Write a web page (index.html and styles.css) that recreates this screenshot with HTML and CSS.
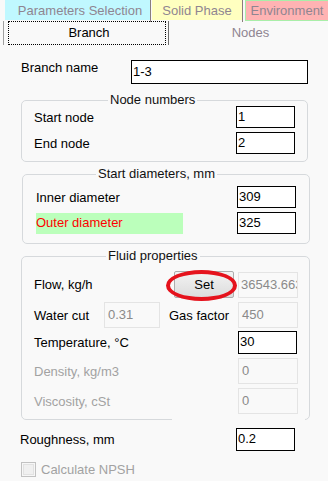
FILE: index.html
```html
<!DOCTYPE html>
<html>
<head>
<meta charset="utf-8">
<link rel="stylesheet" href="styles.css">
</head>
<body>
<div class="tabbar">
  <div class="tab tab-params">Parameters Selection</div>
  <div class="tab-sep"></div>
  <div class="tab tab-solid">Solid Phase</div>
  <div class="tab-sep tab-sep2"></div>
  <div class="tab tab-env">Environment</div>
</div>
<div class="subtabs">
  <div class="subtab-active"><div class="focus">Branch</div></div>
  <div class="subtab-nodes">Nodes</div>
</div>

<div class="branch-row">
  <div class="branch-label">Branch name</div>
  <div class="inp inp-branch">1-3</div>
</div>

<fieldset class="group group-nodes">
  <legend class="legend-nodes">Node numbers</legend>
  <div class="grow nodes-row first">
    <span>Start node</span>
    <div class="inp inp-num">1</div>
  </div>
  <div class="grow nodes-row second">
    <span>End node</span>
    <div class="inp inp-num">2</div>
  </div>
</fieldset>

<fieldset class="group group-diam">
  <legend class="legend-diam">Start diameters, mm</legend>
  <div class="grow diam-row first">
    <span>Inner diameter</span>
    <div class="inp inp-num">309</div>
  </div>
  <div class="grow diam-row second">
    <span class="outer-label">Outer diameter</span>
    <div class="inp inp-num">325</div>
  </div>
</fieldset>

<fieldset class="group group-fluid">
  <legend class="legend-fluid">Fluid properties</legend>
  <div class="grow fluid-row row-flow">
    <span class="fill">Flow, kg/h</span>
    <div class="set-wrap">
      <div class="set-btn">Set</div>
      <div class="set-ring"></div>
    </div>
    <div class="inp-dis inp-dis-num inp-flow">36543.663</div>
  </div>
  <div class="grow fluid-row row-water">
    <span class="water-label">Water cut</span>
    <div class="inp-dis inp-dis-cut">0.31</div>
    <span class="fill gas-label">Gas factor</span>
    <div class="inp-dis inp-dis-num">450</div>
  </div>
  <div class="grow fluid-row row-temp">
    <span>Temperature, °C</span>
    <div class="inp inp-num">30</div>
  </div>
  <div class="grow fluid-row row-dis">
    <span class="dis-label">Density, kg/m3</span>
    <div class="inp-dis inp-dis-num">0</div>
  </div>
  <div class="grow fluid-row row-dis">
    <span class="dis-label">Viscosity, cSt</span>
    <div class="inp-dis inp-dis-num">0</div>
  </div>
</fieldset>

<div class="rough-row">
  <span>Roughness, mm</span>
  <div class="inp inp-num">0.2</div>
</div>

<div class="check-row">
  <span class="checkbox"></span>
  <span class="check-label">Calculate NPSH</span>
</div>
</body>
</html>
```

FILE: styles.css
```css
* { box-sizing: border-box; }
html, body { margin: 0; padding: 0; }
body {
  width: 328px;
  height: 481px;
  overflow: hidden;
  background: #f9f9f9;
  font: 13px/15px "Liberation Sans", Arial, sans-serif;
  color: #000;
}

/* top tab strip */
.tabbar {
  display: flex;
  height: 21px;
  padding-left: 5px;
}
.tab {
  height: 20px;
  line-height: 21px;
  text-align: center;
  color: #8f8591;
  white-space: nowrap;
}
.tab-params { width: 145px; background: #c0f8ff; padding-left: 5px; }
.tab-sep { width: 1px; height: 22px; background: #8a7d7d; margin-right: 1px; }
.tab-sep2 { margin-right: 2px; }
.tab-solid { width: 90px; background: #ffffc0; }
.tab-env {
  flex: 1;
  height: 21px;
  line-height: 19px;
  background: #ffb3b3;
  border: 1px solid #a9eea9;
  border-right: none;
}

/* sub tabs */
.subtabs {
  display: flex;
  height: 24px;
}
.subtab-active {
  margin-left: 3px;
  width: 166px;
  height: 24px;
  border-left: 1px solid #a0a0a0;
  border-right: 1px solid #6d6d6d;
  padding: 0 2px 0 4px;
}
.focus {
  height: 24px;
  border: 1px dotted #000;
  text-align: center;
  line-height: 22px;
  padding-left: 4px;
}
.subtab-nodes {
  flex: 1;
  text-align: center;
  line-height: 24px;
  color: #8f8591;
  padding-left: 4px;
}

/* inputs */
.inp {
  background: #fff;
  border: 1px solid #000;
  padding-left: 1px;
  line-height: 20px;
  white-space: nowrap;
  overflow: hidden;
}
.inp-branch { width: 177px; height: 24px; line-height: 22px; }
.inp-num { width: 59px; height: 22px; margin-right: 1px; }
.inp-dis {
  border: 1px solid #e4e4e4;
  color: #8a8a8a;
  padding-left: 3px;
  height: 26px;
  line-height: 23px;
  white-space: nowrap;
  overflow: hidden;
}
.inp-flow { padding-left: 2px; }
.inp-dis-num { width: 60px; }
.inp-dis-cut { width: 56px; }

/* branch */
.branch-row {
  display: flex;
  margin-top: 15px;
  padding-left: 21px;
  height: 24px;
}
.branch-label { width: 110px; align-self: flex-start; }

/* groups */
.group {
  margin: 0;
  padding: 0;
  border: 1px solid #d6d9dc;
  border-radius: 5px;
  min-inline-size: 0;
}
.group legend {
  padding: 0 2px;
  line-height: 12px;
  height: 12px;
  color: #111;
}
.grow {
  display: flex;
  align-items: center;
  justify-content: space-between;
}

.group-nodes { margin: 10px 0 0 21px; width: 287px; padding-bottom: 7px; }
.legend-nodes { margin-left: 86px; }
.nodes-row { padding: 0 11px 0 12px; height: 22px; }
.nodes-row.second { margin-top: 4px; }

.group-diam { margin: 6px 0 0 22px; width: 288px; padding-bottom: 9px; }
.legend-diam { margin-left: 73px; }
.diam-row { padding: 0 12px 0 13px; height: 22px; }
.diam-row.first { margin-top: 6px; }
.diam-row.second { margin-top: 4px; }
.outer-label {
  width: 147px;
  height: 21px;
  line-height: 20px;
  background: #bbffbb;
  color: #ff0000;
}

.group-fluid {
  position: relative;
  margin: 6px 0 0 21px;
  width: 289px;
  padding-bottom: 5px;
}
/* the bottom edge of this group is interrupted on its right part */
.group-fluid::after {
  content: "";
  position: absolute;
  left: 150px;
  right: 4px;
  bottom: -1px;
  height: 1px;
  background: #f9f9f9;
}
.legend-fluid { margin-left: 84px; }
.fluid-row { padding: 0 11px 0 12px; }
.fill { flex: 1; }
.row-flow { margin-top: 9px; height: 27px; }
.row-water { margin-top: 4px; height: 26px; }
.row-water .inp-dis { height: 26px; }
.water-label { width: 70px; }
.gas-label { margin-left: 9px; }
.row-temp { margin-top: 3px; height: 23px; }
.row-temp .inp { height: 23px; }
.row-dis { margin-top: 4px; height: 26px; }
.dis-label { color: #a2a2a2; }

.set-wrap {
  position: relative;
  width: 60px;
  height: 27px;
  margin-right: 4px;
}
.set-btn {
  height: 27px;
  border: 1px solid #adadad;
  border-radius: 2px;
  background: linear-gradient(#f3f3f3, #dcdcdc);
  text-align: center;
  line-height: 25px;
}
.set-ring {
  position: absolute;
  left: -8px;
  top: -1px;
  width: 71px;
  height: 31px;
  border: 4px solid #e5121c;
  border-radius: 50%;
}

/* roughness */
.rough-row {
  display: flex;
  align-items: center;
  justify-content: space-between;
  margin-top: 8px;
  height: 23px;
  padding: 0 32px 0 20px;
}
.rough-row .inp { height: 23px; }

.check-row {
  display: flex;
  align-items: center;
  margin-top: 11px;
  padding-left: 21px;
  height: 15px;
}
.checkbox {
  width: 15px;
  height: 15px;
  border: 1px solid #c2c2c2;
  background: #f0f0f0;
  box-shadow: inset 0 0 0 1px #f7f7f7, inset 0 0 0 2px #e2e2e2;
}
.check-label { margin-left: 5px; color: #a2a2a2; }
```
